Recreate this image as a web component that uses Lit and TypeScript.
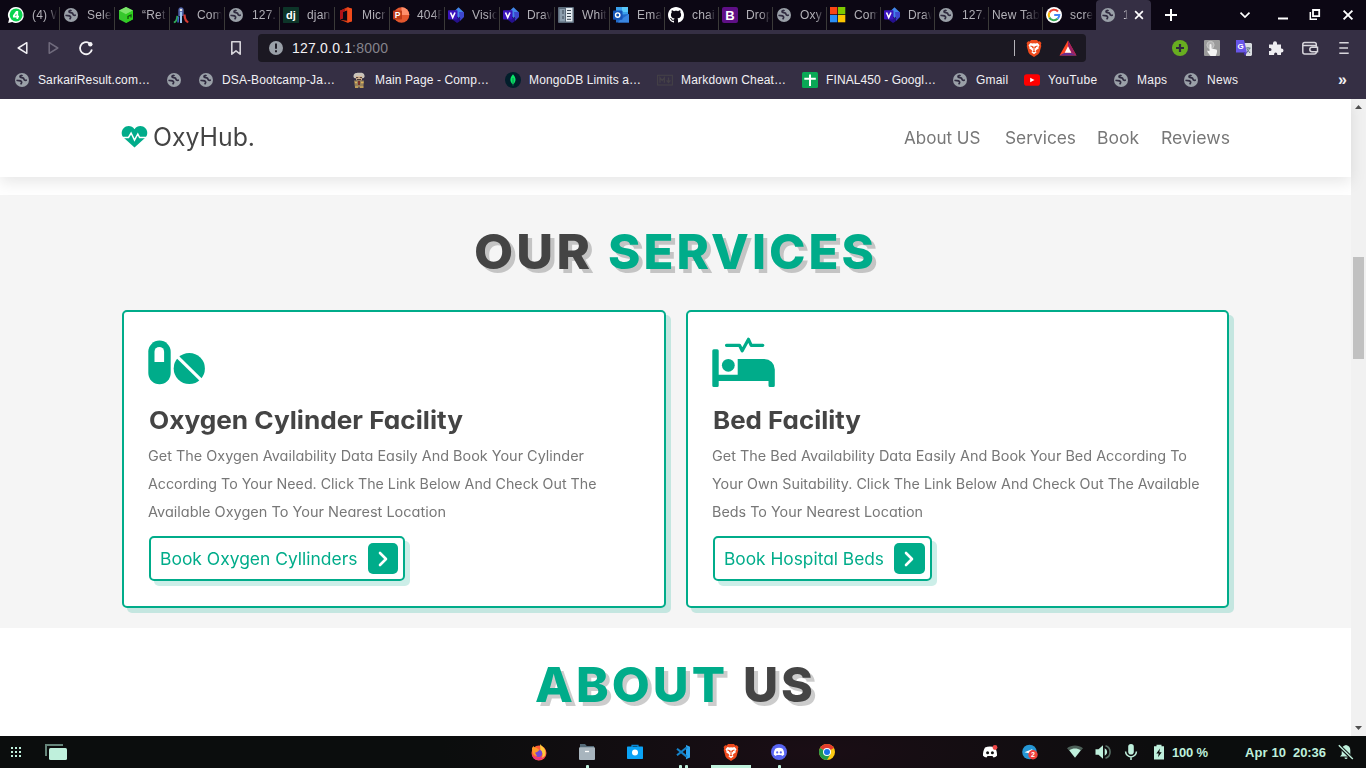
import { LitElement, html, css, svg, nothing } from "lit";
import { customElement, property } from "lit/decorators.js";

const glyphs: Record<string, unknown> = {
  globe: svg`<circle cx="8" cy="8" r="7" fill="#9aa0a8"/><path d="M2.500 8.200c2 .8 3.900 0 4.900 1.300.9 1.200-.4 1.700-.5 2.900M8.300 2.800C7.800 3.900 5.700 3.400 6 4.700c.3 1.200 2.400.6 3.400 1.500.8.800.4 1.700 1.500 2 .8.200 1.400 0 2 0" fill="none" stroke="#302b40" stroke-width="1.700"/>`,
  whatsapp: svg`<path d="M8 0a8 8 0 1 1-3.800 15.100L.2 16l.9-3.900A8 8 0 0 1 8 0z" fill="#fff"/><circle cx="8.100" cy="7.900" r="6.500" fill="#0bd34f"/><path d="M9.300 12V4.800H8.500L5.800 8.800v.9h5.200" fill="none" stroke="#fff" stroke-width="1.700"/>`,
  cube: svg`<path d="M8 0l7 3.600v8.600L8 16l-7-3.800V3.600z" fill="#36c72d"/><path d="M8 0l7 3.600-7 3.700-7-3.700z" fill="#7be36a"/><path d="M8 7.300l7-3.700v8.600L8 16z" fill="#2fd01f"/><path d="M10 12v-2.500l3-1.500v2.500" fill="none" stroke="#14500f" stroke-width="1.300"/>`,
  rocket: svg`<path d="M5.300 3.500C5.300 1.500 6.500.3 8 .3s2.700 1.200 2.700 3.200V9H5.300z" fill="#5063a8"/><path d="M7 5h2v11H7z" fill="#9fc7ee"/><circle cx="8" cy="3" r="1.300" fill="#e6e6e6"/><path d="M.8 15.300c2.500-.3 3.200-3 3.500-6.500" fill="none" stroke="#2faa55" stroke-width="1.800"/><path d="M11.500 7.500c.2 4 .8 7 3.800 7.800" fill="none" stroke="#d63a32" stroke-width="2.200"/><path d="M5.500 9.500L5 15.500" stroke="#3b6bd0" stroke-width="1.500"/>`,
  django: svg`<rect width="16" height="16" rx=".6" fill="#0d3529"/><text x="8" y="11.600" text-anchor="middle" font-family="Liberation Sans" font-weight="700" font-size="11" fill="#fff">dj</text>`,
  office: svg`<path d="M2 3.800L9.500.3 14 1.700v12.500L9.500 15.700 2 12.800l7.200.9V3.500L5 4.700v6.600l-3 1.200z" fill="#dc3e15"/><path d="M9.500.3L14 1.700v12.500l-4.500 1.500z" fill="#f04a1b"/><path d="M2 3.800L7 1.500v2.700L5 4.700v6.600l-3 1.200z" fill="#b01218"/>`,
  ppt: svg`<circle cx="8.500" cy="8" r="7.800" fill="#e4572e"/><path d="M8.500.2a7.800 7.800 0 0 1 7.800 7.800H8.500z" fill="#ff8f6b"/><rect y="3.500" width="9" height="9" rx=".8" fill="#bf3a18"/><text x="4.500" y="11" text-anchor="middle" font-family="Liberation Sans" font-weight="700" font-size="8.500" fill="#fff">P</text>`,
  visio: svg`<path d="M10.500.2L16 5.500 10.500 11 5 5.500z" fill="#4286ea"/><path d="M11 5h5v5l-4 4z" fill="#3d47ce"/><path d="M5 11h7.500l-1 3.500L9 16l-4-3z" fill="#25108d"/><rect y="3.200" width="9.500" height="9.300" rx=".8" fill="#3b14bd"/><path d="M2.500 5.500l2.200 5 2.300-5" stroke="#fff" stroke-width="1.600" fill="none"/>`,
  board: svg`<rect width="16" height="16" rx="1" fill="#5c6b7b"/><path d="M1.500 2h5.500v12.500H1.500z" fill="#8b9dad"/><path d="M8 1h6.500v13.500H8z" fill="#e3ebf1"/><path d="M9 3.500h4M9 6.500h4M9 9.500h4M9 12.300h4M5 3v4M5 9v3" stroke="#3a4754"/>`,
  outlook: svg`<path d="M3 0h12v8H3z" fill="#3aa0ec"/><path d="M9 0h6v5H9z" fill="#5ac8fa"/><path d="M3 8l13-1v8.500H3z" fill="#2169c9"/><path d="M7 13l9-6v8.500H5z" fill="#3a86e0"/><rect y="3.500" width="9.500" height="9.300" rx=".8" fill="#1453b8"/><circle cx="4.700" cy="8.100" r="2.200" fill="none" stroke="#fff" stroke-width="1.400"/>`,
  github: svg`<path fill="#fff" d="M8 0C3.580 0 0 3.580 0 8c0 3.540 2.290 6.530 5.470 7.590.4.070.55-.17.55-.38 0-.19-.01-.82-.01-1.490-2.010.37-2.530-.49-2.690-.94-.09-.23-.48-.94-.82-1.130-.28-.15-.68-.52-.01-.53.63-.01 1.080.58 1.230.82.72 1.210 1.870.87 2.330.66.070-.52.28-.87.51-1.070-1.780-.2-3.640-.89-3.640-3.950 0-.87.31-1.590.82-2.150-.08-.2-.36-1.020.08-2.120 0 0 .67-.21 2.200.82.64-.18 1.320-.27 2-.27s1.360.09 2 .27c1.530-1.040 2.200-.82 2.200-.82.44 1.100.16 1.920.08 2.120.51.56.82 1.270.82 2.150 0 3.070-1.870 3.750-3.650 3.950.29.25.54.73.54 1.480 0 1.070-.01 1.930-.01 2.200 0 .21.15.46.55.38A8.010 8.010 0 0 0 16 8c0-4.420-3.580-8-8-8z"/>`,
  bootstrap: svg`<rect width="16" height="16" rx="2" fill="#5f0f86"/><text x="8" y="12.600" text-anchor="middle" font-family="Liberation Sans" font-weight="700" font-size="13" fill="#fff">B</text>`,
  ms: svg`<path d="M0 0h7.300v7.300H0z" fill="#fa4615"/><path d="M8 0h7.300v7.300H8z" fill="#7ec800"/><path d="M0 8h7.300v7.300H0z" fill="#2b8ef5"/><path d="M8 8h7.300v7.300H8z" fill="#fdc500"/>`,
  google: svg`<circle cx="8" cy="8" r="8" fill="#fff"/><path d="M12 4.500A5.300 5.300 0 0 0 3.400 5.400" fill="none" stroke="#ea4335" stroke-width="2.100"/><path d="M3.400 5.400a5.300 5.300 0 0 0 0 5.200" fill="none" stroke="#fbbc05" stroke-width="2.100"/><path d="M3.400 10.600a5.300 5.300 0 0 0 8.200 1.200" fill="none" stroke="#34a853" stroke-width="2.100"/><path d="M11.600 11.800A5.300 5.300 0 0 0 13.300 8H8.200" fill="none" stroke="#4285f4" stroke-width="2.100"/>`,
  person: svg`<path d="M2.500 4C3 .5 6 1 8 .8s5-.3 5.500 2.700c.5 1.500-.5 2.500-1.500 2.700H4C3 6 2.300 5 2.500 4z" fill="#c9c3ba"/><path d="M4.700 4h6.600l-.5 4.500H5.300z" fill="#d8b896"/><path d="M3 8.500h10l-.7 7H4z" fill="#94805c"/><path d="M5 5.600h2.300M8.700 5.600H11M6 7.500h4" stroke="#4b3a34"/><path d="M7 9h2v4H7z" fill="#7a3028"/><path d="M4 10.500h2M10 10.500h2.500M4 15.200h3M9 15.200h3.500" stroke="#e0b45a" stroke-width="1.300"/>`,
  mongo: svg`<circle cx="8" cy="8" r="8" fill="#021e2b"/><path d="M8 2.300c3.500 3.700 3.400 7.500 0 10.200-3.400-2.700-3.500-6.500 0-10.200z" fill="#09e467"/><path d="M8 6v7.800" stroke="#0b7a45" stroke-width=".8"/>`,
  markdown: svg`<rect x=".6" y="3.300" width="14.800" height="9.700" fill="none" stroke="#444047" stroke-width="1.100"/><path d="M3 10.700V5.800l2.200 2.700 2.200-2.700v4.900M11.500 5.500v4.800M9.600 8.300l1.900 2.200 1.900-2.200" fill="none" stroke="#444047" stroke-width="1.300"/>`,
  sheet: svg`<rect width="16" height="16" rx="1.500" fill="#0aa956"/><path d="M8 2.500v11.500M2.300 6.700h11.500" stroke="#fff" stroke-width="2"/>`,
  youtube: svg`<rect y="2.300" width="16" height="11.400" rx="2.800" fill="#f00"/><path d="M6.200 5.800L10.500 8l-4.300 2.300z" fill="#fff"/>`,
  back: svg`<path d="M12.800 2.700v10.600L4.200 8z" fill="none" stroke="#f0eff3" stroke-width="1.500" stroke-linejoin="round"/>`,
  forward: svg`<path d="M3.200 2.700v10.600L11.800 8z" fill="none" stroke="#706b7d" stroke-width="1.500" stroke-linejoin="round"/>`,
  reload: svg`<path d="M11.300 3.200a6 6 0 1 0 2.600 6.300" fill="none" stroke="#f4f3f6" stroke-width="1.800"/><circle cx="12.300" cy="4.300" r="2.200" fill="#f4f3f6"/>`,
  mark: svg`<path d="M3.800 1.800h8.400v12.400L8 10.800l-4.200 3.400z" fill="none" stroke="#d6d4da" stroke-width="1.600" stroke-linejoin="round"/>`,
  info: svg`<circle cx="8" cy="8" r="7" fill="#9aa0a8"/><path d="M8 3.600v5.200M8 10.300v2" stroke="#1b1822" stroke-width="1.900"/>`,
  brave: svg`<path d="M5 0h6l1.200 1.400 1.600-.2L15.400 3l-.5 1.700.4 1.300-1.800 6.600-1.300 1.600L8 17l-4.200-2.800-1.300-1.600L.7 6l.4-1.300L.6 3l1.600-1.800 1.600.2z" fill="#ee4a1d"/><path d="M4.500 3l2 .5L8 3.200l1.500.3 2-.5 2 2.300-1 1.700.2 1.500L10.300 10l-.5 1.300.8.900L8 14.300l-2.600-2.100.8-.9L5.700 10 3.300 8.500 3.500 7l-1-1.700z" fill="#fff"/><path d="M4.500 6l2.400.8-.5 1.300M11.500 6l-2.400.8.5 1.300M8 7v3.500M6.800 11L8 11.700 9.200 11" fill="none" stroke="#ee4a1d" stroke-width="1.100"/>`,
  bat: svg`<path d="M8 .5l-8.500 15h17z" fill="#ff4724"/><path d="M8 .5l8.500 15-5.200-2.700L8 6.200z" fill="#9e1f63"/><path d="M-.5 15.500h17l-5.200-2.700H4.700z" fill="#662d91"/><path d="M8 6.200l3.300 6.600H4.700z" fill="#fff"/>`,
  plusgreen: svg`<circle cx="8" cy="8" r="8" fill="#68ae20"/><path d="M8 4v8M4 8h8" stroke="#302b40" stroke-width="2.200"/>`,
  touch: svg`<rect width="16" height="16" rx="1" fill="#9b9b9b"/><circle cx="6.500" cy="5" r="3.600" fill="#b3b3b3" stroke="#c8c8c8"/><path d="M5.500 4.500c.8-1 2-.6 2 .6v3.500l4.800 1c1.500.4.5 4.500-.6 6.400H6.500L3.500 12l-.2-1.600 2.200.8z" fill="#f3f3f3"/>`,
  translate: svg`<path d="M8 3h7l1 1v11l-1 1h-5z" fill="#d9dde0"/><path d="M9.500 8h5M12 7v1.500M10.500 13l3.500-5M11 9l3 4" stroke="#637884" stroke-width="1"/><path d="M0 0h8l3 12.500H0z" fill="#6856e8"/><path d="M11 12.500L9 16l-1.500-3.500z" fill="#4a35ba"/><text x="4.700" y="9" text-anchor="middle" font-family="Liberation Sans" font-weight="700" font-size="8" fill="#fff">G</text>`,
  puzzle: svg`<path d="M1 4.500h4V3.300a2 2 0 0 1 4 0v1.200h4v4h.5a2 2 0 0 1 0 4H13V15H9.300v-.8a1.600 1.600 0 0 0-3.200 0v.8H1v-4h1a1.500 1.500 0 0 0 0-3H1z" fill="#eeedf1"/>`,
  wallet: svg`<rect x=".8" y="2.500" width="13.500" height="11.500" rx="2" fill="none" stroke="#d8d6dc" stroke-width="1.500"/><path d="M1 5.500h13.500M15.500 7.300H10a2.200 2.200 0 0 0 0 4.400h5.500z" fill="#302b40" stroke="#d8d6dc" stroke-width="1.500"/>`,
  menu: svg`<path d="M3.300 2.800h9.400M3.300 8h8.700M3.300 13.200h9.400" stroke="#d8d6dc" stroke-width="1.600"/>`,
  plus: svg`<path d="M8 2v12M2 8h12" stroke="#fff" stroke-width="2"/>`,
  chevron: svg`<path d="M3.500 5.700L8 10l4.500-4.300" fill="none" stroke="#fff" stroke-width="1.700"/>`,
  min: svg`<path d="M3 11.500h10" stroke="#fff" stroke-width="2"/>`,
  restore: svg`<path d="M6 3h6.200v6.200H6z" fill="none" stroke="#fff" stroke-width="1.800"/><path d="M3.300 5v7.200H10" fill="none" stroke="#fff" stroke-width="1.500"/>`,
  close: svg`<path d="M3.600 3.600l8.800 8.800M12.400 3.600l-8.800 8.800" stroke="#fff" stroke-width="1.900"/>`,
  firefox: svg`<circle cx="8" cy="9" r="7.500" fill="#ff5a36"/><path d="M1 11c1 5 6 6 9 4.600 4-1.600 5.500-6 4-9.600-.5 4-2.500 7-6 7.500S2.500 12 1 11z" fill="#ef3480"/><path d="M9 0c1 2 6.500 4 5.500 10-.5 2.500-2.300 3.700-4 4 2-2.500 1-6-1-7z" fill="#ffcb3a"/><circle cx="7.600" cy="9.300" r="3.600" fill="#7549d8"/><path d="M1 4c.5-.8 1-1.400 1.500-2 .4 1 1.500 1.500 2.500 1.500L8.500 6 6 8l-2 .7L6 12C2 12 1 8 1 4z" fill="#ff9926"/>`,
  files: svg`<path d="M1 0h5l1.800 2H15v5H1z" fill="#546a78"/><rect y="3.300" width="16" height="12.700" rx="1" fill="#a8b5be"/><path d="M6 7.500h4" stroke="#fff" stroke-width="1.300"/>`,
  camera: svg`<path d="M5 3V1.300h6V3" fill="none" stroke="#078bdb" stroke-width="1.200"/><rect y="2.500" width="16" height="12.500" rx=".7" fill="#0aa3f6"/><circle cx="8" cy="8.600" r="3" fill="#fff"/>`,
  code: svg`<path d="M11 1l4 1.700v10.800L11 15.200z" fill="#2ba4ef"/><path d="M12 3.200L2 11.300M2 4.700l10 8.200" stroke="#1583c9" stroke-width="2.100"/>`,
  discord: svg`<circle cx="8" cy="8" r="8" fill="#5865f2"/><path d="M4.300 4.800c2-1.400 5.400-1.400 7.400 0 1.200 2 1.600 4 1.500 6l-2 1.200-1-1.100H5.800l-1 1.100-2-1.200c-.1-2 .3-4 1.500-6z" fill="#fff"/><circle cx="6.200" cy="8.400" r="1.100" fill="#5865f2"/><circle cx="9.800" cy="8.400" r="1.100" fill="#5865f2"/>`,
  chrome: svg`<circle cx="8" cy="8" r="8" fill="#fdc913"/><path d="M8 8L1.100 4a8 8 0 0 1 13.800 0z" fill="#e33b2e"/><path d="M8 8L1.100 4A8 8 0 0 0 8 16l3.500-6z" fill="#229a4c"/><circle cx="8" cy="8" r="4" fill="#fff"/><circle cx="8" cy="8" r="3" fill="#1a73e8"/>`,
  discordtray: svg`<path d="M3 3.500c3-1.300 7-1.300 10 0 1.500 2.500 2.200 5.500 2 8.200-1 1-2.300 1.600-3.500 1.800l-1-1.500h-5l-1 1.500C3.300 13.300 2 12.700 1 11.700c-.2-2.700.5-5.700 2-8.200z" fill="#fff"/><circle cx="5.600" cy="8.700" r="1.500" fill="#111"/><circle cx="10.400" cy="8.700" r="1.500" fill="#111"/><circle cx="13" cy="3.500" r="2.400" fill="#f04747"/>`,
  telegram: svg`<circle cx="7.500" cy="8" r="7.300" fill="#2596d4"/><path d="M2.500 8.200l8-3.200-2 5-2.500-1z" fill="#fff"/><circle cx="11" cy="10.700" r="4.700" fill="#f0413c"/><text x="11" y="13.200" text-anchor="middle" font-family="Liberation Sans" font-size="7" fill="#fff">2</text>`,
  wifi: svg`<path d="M0 4.300C4.500.5 11.500.5 16 4.300L13.500 7a8.500 8.500 0 0 0-11 0z" fill="#4d6058"/><path d="M2.300 6.500C5.500 3.900 10.500 3.900 13.700 6.500L8 13.800z" fill="#bff0dc"/>`,
  sound: svg`<path d="M.5 5.300h3L8 1.300v13.400l-4.500-4h-3z" fill="#bff0dc"/><path d="M9.700 4.300v7.400a4 4 0 0 0 0-7.400z" fill="#bff0dc"/><path d="M10.500 1.800a6.500 6.500 0 0 1 0 12.400" fill="none" stroke="#587066" stroke-width="1.600"/>`,
  mic: svg`<rect x="5.200" y="0" width="5.600" height="10.500" rx="2.800" fill="#bff0dc"/><path d="M2.600 7.500a5.400 5.400 0 0 0 10.800 0M8 12.800V16" fill="none" stroke="#bff0dc" stroke-width="1.500"/>`,
  battery: svg`<path d="M5.500.8h5V2.300H13V15.500H3V2.300h2.500z" fill="#bff0dc"/><path d="M9 4.500L5.300 9.500h2.400L7 13.300l3.700-5H8.300z" fill="#0b0d0d"/>`,
  bell: svg`<path d="M8 1c3 .5 4.300 2.500 4.300 5v4.500l1.700 2H2l1.700-2V6C3.700 3.500 5 1.500 8 1zM6.500 13.500h3a1.500 1.500 0 0 1-3 0z" fill="#bff0dc"/><path d="M.8 1.500L15 15.300" stroke="#0b0d0d" stroke-width="3.500"/><path d="M.8 1.200L14.800 15" stroke="#bff0dc" stroke-width="1.400"/>`,
};

const icon = (name: string, size = 16) =>
  html`<svg width=${size} height=${size} viewBox="0 0 16 16" overflow="visible" aria-hidden="true">${glyphs[name]}</svg>`;

/** A single line of text that spans `span` pixels, by tracking or, with `stretch`, by widening the glyphs. */
@customElement("fit-text")
export class FitText extends LitElement {
  @property({ type: Number }) span = 0;
  @property({ type: Number }) track = 0;
  @property({ type: Boolean }) stretch = false;
  @property() text = "";
  static styles = css`
    :host { display: block; white-space: nowrap; }
    span { display: inline-block; transform-origin: 0 50%; }
  `;
  render() {
    return html`<span>${this.text}</span>`;
  }
  updated() {
    const el = this.renderRoot.querySelector("span") as HTMLElement;
    el.style.letterSpacing = `${this.track}px`;
    const natural = el.offsetWidth ? el.getBoundingClientRect().width : this.span;
    if (this.stretch) {
      const inked = natural - this.track;
      el.style.transform = `scaleX(${this.span / inked})`;
      el.style.marginRight = `${this.span - natural}px`;
      return;
    }
    const gap = (this.span - natural) / Math.max(1, this.text.length - 1);
    el.style.letterSpacing = `${gap}px`;
    el.style.marginRight = `${-gap}px`;
  }
}

const fit = (text: string, span: number) => html`<fit-text .text=${text} .span=${span}></fit-text>`;
const wide = (text: string, span: number, track = 0) =>
  html`<fit-text .text=${text} .span=${span} .track=${track} .stretch=${true}></fit-text>`;

const tabs: [string, string, number][] = [
  ["whatsapp", "(4) W", 60], ["globe", "Sele", 55], ["cube", "“Ret", 55], ["rocket", "Com", 55],
  ["globe", "127.", 55], ["django", "djan", 55], ["office", "Micr", 55], ["ppt", "404F", 55],
  ["visio", "Visio", 55], ["visio", "Draw", 55], ["board", "Whit", 55], ["outlook", "Ema", 55],
  ["github", "chai", 54], ["bootstrap", "Drop", 54], ["globe", "Oxy", 54], ["ms", "Com", 54],
  ["visio", "Draw", 54], ["globe", "127.", 54], ["", "New Tab", 54], ["google", "scre", 53],
];

const bookmarks: [string, string, number][] = [
  ["globe", "SarkariResult.com…", 112], ["globe", "", 0], ["globe", "DSA-Bootcamp-Ja…", 113],
  ["person", "Main Page - Comp…", 114], ["mongo", "MongoDB Limits a…", 112], ["markdown", "Markdown Cheat…", 105],
  ["sheet", "FINAL450 - Googl…", 110], ["globe", "Gmail", 32], ["youtube", "YouTube", 49],
  ["globe", "Maps", 30], ["globe", "News", 31],
];

@customElement("browser-chrome")
export class BrowserChrome extends LitElement {
  static styles = css`
    :host { display: block; height: 99px; background: #352f44; font: 12px "Liberation Sans", sans-serif; color: #f2f1f4; }
    svg { display: block; flex: none; }
    .tabs { display: flex; height: 30px; background: #0c0714; }
    .tab { box-sizing: border-box; display: flex; align-items: center; gap: 8px; padding-left: 3px; position: relative; color: #b2b0b7; overflow: hidden; }
    .tab:first-child { padding-left: 8px; }
    .tab::after { content: ""; position: absolute; right: 0; top: 7px; bottom: 0; width: 1px; background: #3b3a39; }
    .tab.last::after { display: none; }
    .name { white-space: nowrap; overflow: hidden; flex: 1; margin-right: 3px; letter-spacing: .2px;
      -webkit-mask-image: linear-gradient(90deg, #000 65%, transparent); mask-image: linear-gradient(90deg, #000 65%, transparent); }
    .active { box-sizing: border-box; width: 55px; display: flex; align-items: center; background: #352f44; border-radius: 4px 4px 0 0; padding-left: 4px; }
    .active .one { width: 7px; margin: 0 2px 0 7px; color: #d7d5db;
      -webkit-mask-image: linear-gradient(90deg, #000 20%, transparent 70%); mask-image: linear-gradient(90deg, #000 20%, transparent 70%); }
    .controls { flex: 1; display: flex; align-items: center; padding-left: 12px; }
    .controls svg:nth-child(2) { margin-left: 58px; }
    .controls svg:nth-child(3) { margin-left: 22px; }
    .controls svg:nth-child(4) { margin-left: 16px; }
    .controls svg:nth-child(5) { margin-left: 17px; }
    .toolbar { display: flex; align-items: center; height: 36px; padding-left: 14px; }
    .nav { display: flex; gap: 16px; width: 214px; }
    .url { box-sizing: border-box; display: flex; align-items: center; width: 828px; height: 28px; margin-left: 14px; padding: 0 10px; border-radius: 4px; background: #1b1822; font-size: 14px; }
    .host { margin-left: 8px; }
    .port { color: #85838b; }
    .rule { width: 1px; height: 16px; background: #b5b3b9; margin: 0 11px 0 auto; }
    .bat { margin: 0 0 0 18px; }
    .ext { display: flex; gap: 16px; margin-left: 86px; }
    .ext svg:nth-child(5) { margin-left: 2px; }
    .ext svg:nth-child(6) { margin-left: 2px; }
    .marks { display: flex; align-items: center; gap: 16px; height: 28px; padding: 0 0 0 14px; }
    .bm { display: flex; align-items: center; gap: 8px; }
    .more { margin-left: 84px; font-size: 16px; font-weight: 700; line-height: 16px; padding-bottom: 1px; }
  `;
  render() {
    return html`
      <div class="tabs">
        ${tabs.map(([i, t, w], n) => html`<div class="tab ${n === tabs.length - 1 ? "last" : ""}" style="width:${w}px">
          ${i ? icon(i) : nothing}<span class="name">${t}</span></div>`)}
        <div class="active">${icon("globe")}<span class="one">1</span>${icon("close", 14)}</div>
        <div class="controls">${["plus", "chevron", "min", "restore", "close"].map((n) => icon(n))}</div>
      </div>
      <div class="toolbar">
        <div class="nav">${icon("back")}${icon("forward")}${icon("reload")}</div>
        ${icon("mark")}
        <div class="url">${icon("info")}<span class="host">${fit("127.0.0.1", 60)}</span><span class="port">${fit(":8000", 36)}</span>
          <span class="rule"></span>${icon("brave")}<span class="bat">${icon("bat")}</span></div>
        <div class="ext">${["plusgreen", "touch", "translate", "puzzle", "wallet", "menu"].map((n) => icon(n))}</div>
      </div>
      <div class="marks">
        ${bookmarks.map(([i, t, w]) => html`<div class="bm">${icon(i)}${t ? fit(t, w) : nothing}</div>`)}
        <span class="more">»</span>
      </div>`;
  }
}

const pills = svg`<rect x="-.7" y="3.600" width="22.400" height="43.600" rx="11.200"/><path d="M5.500 24.900V14.700a4.800 4.800 0 0 1 9.600 0v10.200z" fill="#fff"/><circle cx="40.300" cy="31.500" r="15.600"/><path d="M27 18.400l27.500 27" stroke="#fff" stroke-width="3.200"/>`;
const bed = svg`<path d="M-.7 13.800q0-1.500 1.500-1.500h3.400q1.500 0 1.500 1.500v23.900h19V22h26.600a10.500 10.500 0 0 1 10.500 10.500v16q0 1.500-1.500 1.500h-3.300q-1.500 0-1.500-1.500V44H5.700v4.500q0 1.500-1.500 1.500H.8q-1.500 0-1.500-1.500z"/><circle cx="15.300" cy="28.300" r="6.400"/><path d="M13.500 8.300h13l2.700 5.500 6.300-11.500 2.700 6h11.600" fill="none" stroke="#00ac8a" stroke-width="3.200" stroke-linecap="round" stroke-linejoin="round"/>`;

const services = [
  {
    art: pills, title: ["Oxygen Cylinder Facility", 314] as const,
    lines: [["Get The Oxygen Availability Data Easily And Book Your Cylinder", 436], ["According To Your Need. Click The Link Below And Check Out The", 448.5], ["Available Oxygen To Your Nearest Location", 298]] as const,
    action: ["Book Oxygen Cyllinders", 197.5] as const,
  },
  {
    art: bed, title: ["Bed Facility", 148] as const,
    lines: [["Get The Bed Availability Data Easily And Book Your Bed According To", 475], ["Your Own Suitability. Click The Link Below And Check Out The Available", 487.5], ["Beds To Your Nearest Location", 211]] as const,
    action: ["Book Hospital Beds", 160] as const,
  },
];

@customElement("oxy-page")
export class OxyPage extends LitElement {
  static styles = css`
    :host { display: flex; height: 637px; overflow: hidden; background: #fff; font-family: Inter, "Open Sans", sans-serif; font-feature-settings: "cv11"; color: #444; }
    svg { display: block; flex: none; overflow: visible; }
    .page { flex: 1; min-width: 0; }
    header { box-sizing: border-box; height: 78px; display: flex; align-items: center; padding: 0 121.500px 0 122px; background: #fff; box-shadow: 0 5px 15px rgba(0, 0, 0, .1); position: relative; }
    .logo { display: flex; align-items: center; gap: 6px; font-size: 25px; line-height: 30px; }
    .logo svg { margin: -2px 0 0 -.5px; }
    .logo fit-text { margin-top: -2px; }
    nav { display: flex; margin-left: auto; font-size: 17px; line-height: 24px; color: #777; gap: 21.500px; }
    nav fit-text:first-child { margin-right: 2.500px; }
    section { padding: 20px 122px 20px; }
    .services { margin-top: 18px; background: #f5f5f5; }
    h1 { margin: 0 0 20px; height: 75px; display: flex; justify-content: center; align-items: center; gap: 18px; font-size: 48.500px; font-weight: 800; line-height: 75px; text-shadow: 4px 4px 0 rgba(0, 0, 0, .2); padding-right: 4px; box-sizing: border-box; }
    h1 fit-text { margin-top: -3px; }
    .accent { color: #00ac8a; }
    .cards { display: grid; grid-template-columns: 544px 543px; gap: 20px; }
    .card { box-sizing: border-box; height: 298px; border: 2px solid #00ac8a; border-radius: 5px; padding: 25px; background: #fff; box-shadow: 5px 5px 0 rgba(0, 172, 138, .2); }
    .art { fill: #00ac8a; }
    h2 { margin: 0 0 0 -.5px; height: 55px; padding-top: 6px; box-sizing: border-box; line-height: 55px; font-size: 24.700px; font-weight: 700; }
    p { margin: 0 0 0 -1px; font-size: 14px; line-height: 28px; color: #777; }
    .button { display: inline-flex; box-sizing: border-box; align-items: center; gap: 10px; height: 45px; margin-top: 10px; padding: 0 5px 0 9px; border: 2px solid #00ac8a; border-radius: 5px; color: #00ac8a; font-size: 17px; box-shadow: 5px 5px 0 rgba(0, 172, 138, .2); }
    .arrow { width: 30.500px; height: 31px; border-radius: 5px; background: #00ac8a; display: grid; place-items: center; }
    .scroll { width: 15px; background: #f1f1f1; display: flex; flex-direction: column; align-items: center; }
    .thumb { width: 11px; height: 102px; background: #c1c1c1; margin: 143px 0 auto; }
    .scroll svg { fill: #505050; }
  `;
  render() {
    return html`
      <div class="page">
        <header>
          <div class="logo">
            <svg width="25" height="22" viewBox="0 0 25 22"><path d="M12.500 3.300C10-.7 4.500-1 1.600 2.200-1 5-.8 9 1.500 11.500L12.500 21.500l11-10C25.800 9 26 5 23.400 2.200 20.500-1 15-.7 12.500 3.300z" fill="#00ac8a"/><path d="M.5 11.500h6l2.600-4.500 3.400 7 3.300-6 1.800 3.500h7" fill="none" stroke="#fff" stroke-width="1.500"/></svg>
            ${wide("OxyHub.", 102)}
          </div>
          <nav>${wide("About US", 76.5)}${wide("Services", 71)}${wide("Book", 42)}${wide("Reviews", 69)}</nav>
        </header>
        <section class="services">
          <h1>${wide("OUR", 116, 3)}<span class="accent">${wide("SERVICES", 266, 3)}</span></h1>
          <div class="cards">${services.map((s) => html`
            <article class="card">
              <svg class="art" width="62" height="50" viewBox="0 0 62 50">${s.art}</svg>
              <h2>${wide(...s.title)}</h2>
              <p>${s.lines.map((l) => wide(l[0], l[1]))}</p>
              <div class="button">${wide(...s.action)}
                <span class="arrow"><svg width="16" height="16" viewBox="0 0 16 16"><path d="M5 2l6 6-6 6" fill="none" stroke="#fff" stroke-width="2.600" stroke-linecap="round" stroke-linejoin="round"/></svg></span>
              </div>
            </article>`)}</div>
        </section>
        <section class="about"><h1><span class="accent">${wide("ABOUT", 190, 3)}</span>${wide("US", 70, 3)}</h1></section>
      </div>
      <div class="scroll">
        <svg width="7" height="15" viewBox="0 0 7 15"><path d="M0 10l3.500-4L7 10z"/></svg>
        <div class="thumb"></div>
        <svg width="7" height="15" viewBox="0 0 7 15"><path d="M0 5l3.500 4L7 5z"/></svg>
      </div>`;
  }
}

const tasks: [string, string][] = [
  ["firefox", ""], ["files", "dot"], ["camera", ""], ["code", "dots"], ["brave", "bar"], ["discord", "dot"], ["chrome", ""],
];
const tray: [string, number][] = [["discordtray", 40], ["telegram", 51], ["wifi", 28], ["sound", 28], ["mic", 28], ["battery", 27]];

@customElement("desktop-bar")
export class DesktopBar extends LitElement {
  static styles = css`
    :host { display: flex; height: 32px; color: #bff0dc; font: 700 13px "Liberation Sans", sans-serif; align-items: center;
      background: radial-gradient(ellipse 380px 80px at 820px 16px, #1a0d15, #0b0d0d); }
    svg { display: block; }
    .left { width: 505px; padding-left: 10px; display: flex; align-items: center; gap: 23px; }
    .task { width: 48px; height: 32px; display: flex; flex-direction: column; align-items: center; padding-top: 8px; box-sizing: border-box; }
    .run { margin-top: auto; height: 3px; display: flex; gap: 3px; }
    .dot i, .dots i { width: 3px; height: 3px; border-radius: 1px 1px 0 0; background: #bff0dc; }
    .bar { width: 40px; background: #bff0dc; }
    .tray { display: flex; align-items: center; margin-left: 119px; }
    .cell { padding-left: 12px; box-sizing: border-box; }
    .cell:nth-child(n+3) { padding-left: 6px; }
    .date { margin-left: 37px; }
    .time { margin-left: 7px; }
    .bell { margin-left: 12px; }
  `;
  render() {
    return html`
      <div class="left">
        <svg width="12" height="12" viewBox="0 0 12 12" fill="#bff0dc">${[1, 5, 9].map((y) => [1, 5, 9].map((x) => svg`<rect x=${x} y=${y} width="2" height="2"/>`))}</svg>
        <svg width="22" height="16" viewBox="0 0 22 16"><path d="M1 12V1h17" fill="none" stroke="#66857a" stroke-width="2"/><rect x="4" y="4" width="18" height="12" rx="1.500" fill="#bff0dc"/></svg>
      </div>
      ${tasks.map(([n, s]) => html`<div class="task">${icon(n)}<span class="run ${s}">${s.startsWith("dot") ? html`<i></i>` : nothing}${s === "dots" ? html`<i></i>` : nothing}</span></div>`)}
      <div class="tray">${tray.map(([n, w]) => html`<span class="cell" style="width:${w}px">${icon(n)}</span>`)}${fit("100 %", 36)}</div>
      <span class="date">${fit("Apr 10", 41)}</span><span class="time">${fit("20:36", 33)}</span>
      <span class="bell">${icon("bell")}</span>`;
  }
}

@customElement("app-root")
export class AppRoot extends LitElement {
  static styles = css`
    :host { display: flex; flex-direction: column; width: 1366px; height: 768px; overflow: hidden; }
  `;
  render() {
    return html`<browser-chrome></browser-chrome><oxy-page></oxy-page><desktop-bar></desktop-bar>`;
  }
}
